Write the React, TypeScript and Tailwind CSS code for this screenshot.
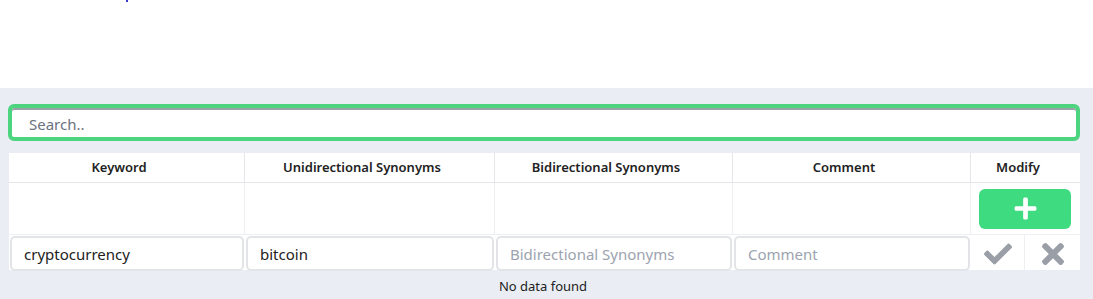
import React from "react";
import { FaCheck, FaTimes, FaPlus } from "react-icons/fa";

export default function App() {
  const font = { fontFamily: '"Noto Sans", "Open Sans", sans-serif' };
  return (
    <div className="w-[1093px] h-[299px] overflow-hidden bg-white" style={font}>
      <div className="h-[88px] bg-white">
        <div className="ml-[126px] w-[2px] h-[2px] bg-[#3b3bd0]"></div>
      </div>
      <div className="bg-[#eaedf4] h-[211px] pt-[16px] pl-[8px] pr-[13px]">
        <div className="h-[37px] border-[4px] border-[#4cd47f] rounded-[6px] bg-white shadow-[inset_0_2px_0_#9aa0a6] flex items-center pl-[17px] pt-[4px]">
          <input
            className="w-full outline-none bg-transparent text-[15px] text-[#333] placeholder:text-[#6b7280]"
            placeholder="Search.."
            style={font}
          />
        </div>
        <div className="mt-[12px] ml-[1px] bg-white grid grid-cols-[236px_250px_238px_238px_54px_55px] text-[#222]">
          {/* header */}
          <div className="h-[30px] flex items-center justify-center pr-[15px] text-[13px] font-semibold border-r border-b border-[#e5e7eb]">Keyword</div>
          <div className="h-[30px] flex items-center justify-center pr-[15px] text-[13px] font-semibold border-r border-b border-[#e5e7eb]">Unidirectional Synonyms</div>
          <div className="h-[30px] flex items-center justify-center pr-[15px] text-[13px] font-semibold border-r border-b border-[#e5e7eb]">Bidirectional Synonyms</div>
          <div className="h-[30px] flex items-center justify-center pr-[15px] text-[13px] font-semibold border-r border-b border-[#e5e7eb]">Comment</div>
          <div className="col-span-2 h-[30px] flex items-center justify-center pr-[15px] text-[13px] font-semibold border-b border-[#e5e7eb]">Modify</div>
          {/* row 1 */}
          <div className="h-[52px] border-r border-b border-[#eeeff2]"></div>
          <div className="h-[52px] border-r border-b border-[#eeeff2]"></div>
          <div className="h-[52px] border-r border-b border-[#eeeff2]"></div>
          <div className="h-[52px] border-r border-b border-[#eeeff2]"></div>
          <div className="col-span-2 h-[52px] border-b border-[#eeeff2] flex items-center justify-center pr-[1px]">
            <button className="w-[92px] h-[40px] rounded-[6px] bg-[#3fdb80] flex items-center justify-center text-white">
              <FaPlus size={25} />
            </button>
          </div>
          {/* row 2 */}
          <div className="h-[35px] px-[1px] pt-[1px]">
            <input defaultValue="cryptocurrency" className="w-full h-[35px] border-2 border-[#e2e4e8] rounded-[5px] px-[12px] text-[15px] text-[#222] outline-none" style={font} />
          </div>
          <div className="h-[35px] px-[1px] pt-[1px]">
            <input defaultValue="bitcoin" className="w-full h-[35px] border-2 border-[#e2e4e8] rounded-[5px] px-[12px] text-[15px] text-[#222] outline-none" style={font} />
          </div>
          <div className="h-[35px] px-[1px] pt-[1px]">
            <input placeholder="Bidirectional Synonyms" className="w-full h-[35px] border-2 border-[#e2e4e8] rounded-[5px] px-[12px] text-[15px] outline-none placeholder:text-[#9ca3af]" style={font} />
          </div>
          <div className="h-[35px] px-[1px] pt-[1px]">
            <input placeholder="Comment" className="w-full h-[35px] border-2 border-[#e2e4e8] rounded-[5px] px-[12px] text-[15px] outline-none placeholder:text-[#9ca3af]" style={font} />
          </div>
          <div className="h-[35px] flex items-center justify-center pt-[2px] border-r border-[#eeeff2] text-[#9a9ea6]">
            <FaCheck size={28} />
          </div>
          <div className="h-[35px] flex items-center justify-center pt-[2px] text-[#9a9ea6]">
            <FaTimes size={32} />
          </div>
        </div>
        <div className="text-center text-[13px] text-[#222] mt-[7px] pr-[2px]">No data found</div>
      </div>
    </div>
  );
}
